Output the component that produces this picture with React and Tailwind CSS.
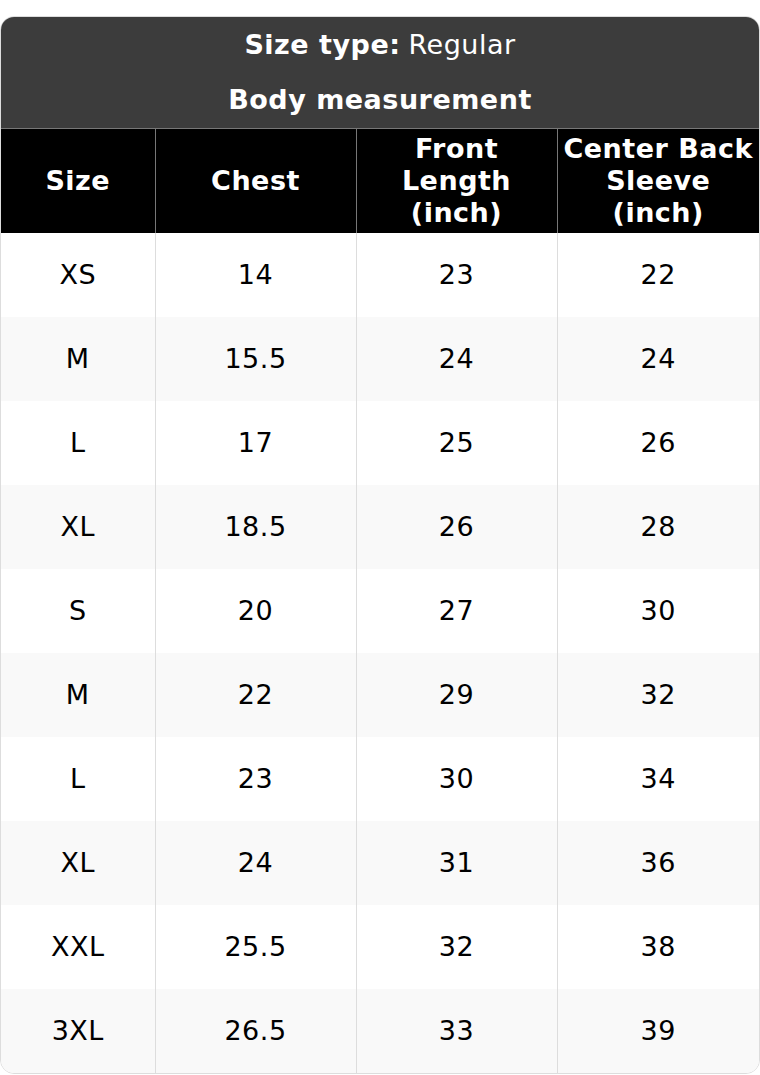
import React from "react";

const rows = [
  ["XS", "14", "23", "22"],
  ["M", "15.5", "24", "24"],
  ["L", "17", "25", "26"],
  ["XL", "18.5", "26", "28"],
  ["S", "20", "27", "30"],
  ["M", "22", "29", "32"],
  ["L", "23", "30", "34"],
  ["XL", "24", "31", "36"],
  ["XXL", "25.5", "32", "38"],
  ["3XL", "26.5", "33", "39"],
];

const App = () => {
  return (
    <div className="bg-white pt-4" style={{ fontFamily: '"DejaVu Sans", sans-serif' }}>
      <div className="w-[760px] rounded-[14px] overflow-hidden border border-[#dddddd] text-[27px] leading-[32px] tracking-[0.5px]">
        <div className="bg-[#3c3c3c] text-white text-center border-b border-[#777777]">
          <div className="h-[55px] flex items-center justify-center">
            <span className="font-bold">Size type:</span>
            <span className="ml-2">Regular</span>
          </div>
          <div className="h-[56px] flex items-center justify-center font-bold">Body measurement</div>
        </div>
        <table className="w-full table-fixed border-collapse text-center">
          <colgroup>
            <col className="w-[154px]" />
            <col className="w-[201px]" />
            <col className="w-[201px]" />
            <col />
          </colgroup>
          <thead>
            <tr className="bg-black text-white font-bold h-[104px]">
              <th className="border-r border-[#777777] p-0">Size</th>
              <th className="border-r border-[#777777] p-0">Chest</th>
              <th className="border-r border-[#777777] p-0">
                Front
                <br />
                Length
                <br />
                (inch)
              </th>
              <th className="p-0">
                Center Back
                <br />
                Sleeve
                <br />
                (inch)
              </th>
            </tr>
          </thead>
          <tbody className="text-black">
            {rows.map((r, i) => (
              <tr key={i} className={`h-[84px] ${i % 2 === 1 ? "bg-[#f9f9f9]" : "bg-white"}`}>
                {r.map((c, j) => (
                  <td key={j} className={`p-0 ${j < 3 ? "border-r border-[#dddddd]" : ""}`}>
                    {c}
                  </td>
                ))}
              </tr>
            ))}
          </tbody>
        </table>
      </div>
    </div>
  );
};

export default App;
